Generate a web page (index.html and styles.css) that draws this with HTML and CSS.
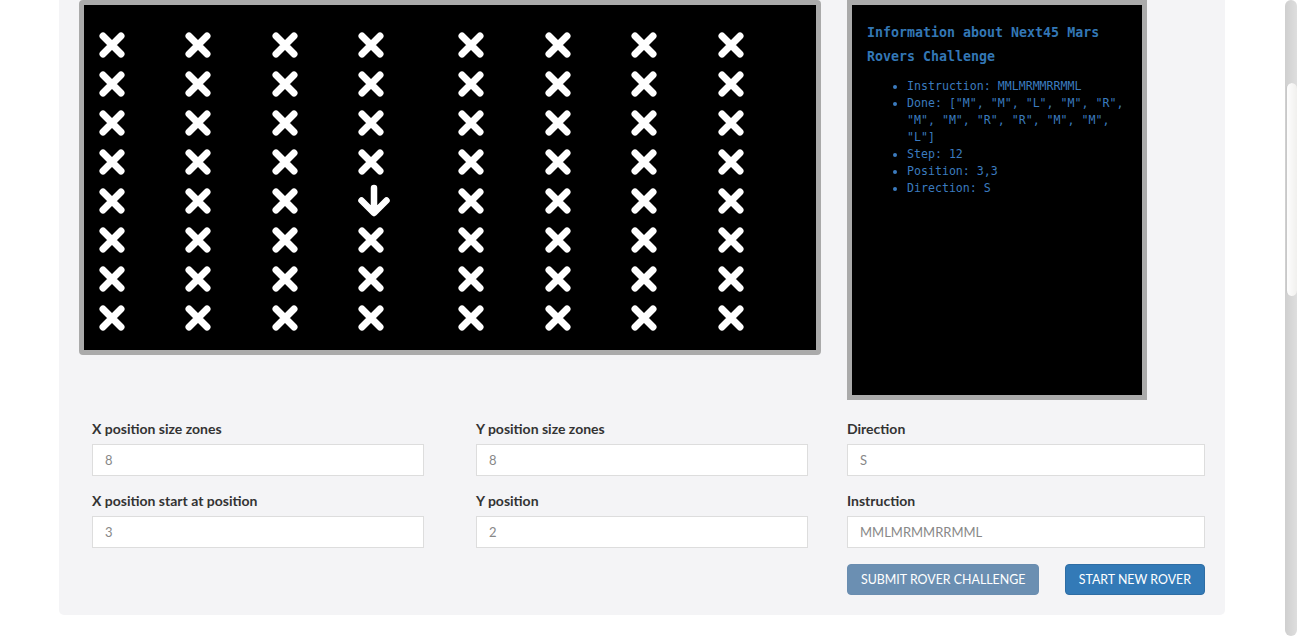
FILE: index.html
```html
<!DOCTYPE html>
<html>
<head>
<meta charset="utf-8">
<link rel="stylesheet" href="styles.css">
<title>Next45 Mars Rovers</title>
</head>
<body>
<svg width="0" height="0" class="defs">
  <defs>
    <symbol id="x" viewBox="0 0 26 26">
      <path d="M4 4 L22 22 M22 4 L4 22" stroke="#fff" stroke-width="7" stroke-linecap="round" fill="none"/>
    </symbol>
  </defs>
</svg>
<div class="card">
  <div class="top">
    <div class="board">
      <div class="grid" id="grid"></div>
    </div>
    <div class="info">
      <h3 class="info-title">Information about Next45 Mars Rovers Challenge</h3>
      <ul class="info-list">
        <li>Instruction: MMLMRMMRRMML</li>
        <li>Done: ["M", "M", "L", "M", "R", "M", "M", "R", "R", "M", "M", "L"]</li>
        <li>Step: 12</li>
        <li>Position: 3,3</li>
        <li>Direction: S</li>
      </ul>
    </div>
  </div>
  <div class="form">
    <div class="col col-a">
      <div class="field">
        <label class="label">X position size zones</label>
        <input class="input" value="8">
      </div>
      <div class="field">
        <label class="label">X position start at position</label>
        <input class="input" value="3">
      </div>
    </div>
    <div class="col col-b">
      <div class="field">
        <label class="label">Y position size zones</label>
        <input class="input" value="8">
      </div>
      <div class="field">
        <label class="label">Y position</label>
        <input class="input" value="2">
      </div>
    </div>
    <div class="col col-c">
      <div class="field">
        <label class="label">Direction</label>
        <input class="input" value="S">
      </div>
      <div class="field">
        <label class="label">Instruction</label>
        <input class="input" value="MMLMRMMRRMML">
      </div>
      <div class="buttons">
        <button class="btn btn-disabled">SUBMIT ROVER CHALLENGE</button>
        <button class="btn btn-primary">START NEW ROVER</button>
      </div>
    </div>
  </div>
</div>
<div class="scrollbar"><div class="thumb"></div></div>
<script src="app.js"></script>
</body>
</html>
```
FILE: app.js
```js
(function () {
  var grid = document.getElementById('grid');
  var html = '';
  for (var r = 0; r < 8; r++) {
    for (var c = 0; c < 8; c++) {
      if (r === 4 && c === 3) {
        html += '<div class="cell"><svg class="arrow" width="34" height="32" viewBox="-3 0 34 32"><path d="M17 3 L17 27 M4.5 15.5 L17 28 L29.5 15.5" stroke="#fff" stroke-width="6.5" stroke-linecap="round" stroke-linejoin="round" fill="none"/></svg></div>';
      } else {
        html += '<div class="cell"><svg width="26" height="26"><use href="#x"/></svg></div>';
      }
    }
  }
  grid.innerHTML = html;
})();
```
FILE: styles.css
```css
html, body {
  margin: 0;
  padding: 0;
  background: #fff;
}
body {
  font-family: Lato, "Liberation Sans", sans-serif;
  overflow: hidden;
  height: 639px;
}
.defs {
  position: absolute;
}
.card {
  margin-left: 59px;
  width: 1166px;
  background: #f4f4f6;
  border-radius: 0 0 5px 5px;
  padding: 0 0 20px 0;
  box-sizing: border-box;
}
.top {
  display: flex;
  align-items: flex-start;
  padding-left: 20px;
  gap: 26px;
}
.board {
  width: 742px;
  height: 355px;
  box-sizing: border-box;
  border: 5px solid #aaa;
  border-radius: 4px;
  background: #000;
}
.grid {
  display: grid;
  grid-template-columns: 86px 87px 86px 100px 87px 86px 87px 26px;
  grid-auto-rows: 39px;
  padding: 20px 0 0 15px;
}
.cell {
  width: 26px;
  height: 39px;
  display: flex;
  align-items: center;
  justify-content: center;
}
.cell svg {
  display: block;
  flex: none;
}
.arrow {
  overflow: visible;
}
.info {
  width: 300px;
  height: 400px;
  box-sizing: border-box;
  border: 5px solid #aaa;
  background: #000;
  padding: 16px 8px 0 15px;
  font-family: "DejaVu Sans Mono", "Liberation Mono", monospace;
}
.info-title {
  margin: 0;
  font-size: 13.3px;
  line-height: 24px;
  font-weight: bold;
  color: #3377b5;
}
.info-list {
  margin: 9px 0 0 0;
  padding-left: 40px;
  font-size: 11.6px;
  line-height: 17px;
  color: #3b7bbf;
}
.form {
  display: flex;
  margin-top: 19px;
  padding-left: 33px;
}
.col {
  display: flex;
  flex-direction: column;
  gap: 15px;
}
.col-a {
  width: 332px;
  margin-right: 52px;
}
.col-b {
  width: 332px;
  margin-right: 39px;
}
.col-c {
  width: 358px;
}
.field {
  display: flex;
  flex-direction: column;
  gap: 5px;
}
.label {
  font-size: 14px;
  line-height: 20px;
  font-weight: bold;
  color: #333;
}
.input {
  height: 32px;
  box-sizing: border-box;
  border: 1px solid #ddd;
  background: #fff;
  padding: 0 12px;
  font-family: Lato, "Liberation Sans", sans-serif;
  font-size: 13px;
  color: #888;
  outline: none;
  margin: 0;
}
.buttons {
  display: flex;
  justify-content: space-between;
  margin-top: 1px;
}
.btn {
  height: 31px;
  box-sizing: border-box;
  padding: 0 13px;
  border-radius: 4px;
  font-family: Lato, "Liberation Sans", sans-serif;
  font-size: 12.4px;
  color: #fff;
  cursor: pointer;
}
.btn-disabled {
  background: #6b8fb2;
  border: 1px solid #6a8db0;
}
.btn-primary {
  background: #337ab7;
  border: 1px solid #2e6da4;
}
.scrollbar {
  position: fixed;
  top: 0;
  right: 0;
  width: 12px;
  height: 636px;
  background: linear-gradient(to right, #cfcfcf, #dedede);
  border-radius: 6px;
}
.thumb {
  position: absolute;
  left: 1px;
  right: 0;
  top: 83px;
  height: 213px;
  background: linear-gradient(to right, #fdfdfd, #f1f0ee);
  border-radius: 6px;
  border-left: 1px solid #c8c8c8;
}
```
